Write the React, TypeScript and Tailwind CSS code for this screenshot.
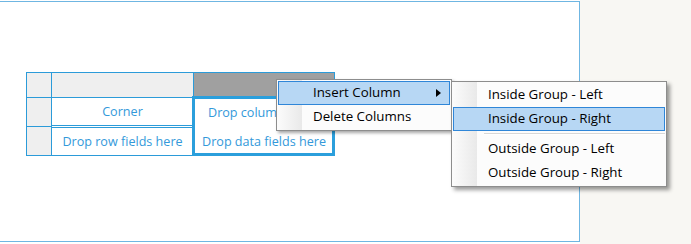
import { useState } from 'react';

const line = 'border-[#2b9bd9]';

function MenuItem({ label, active, arrow }: { label: string; active?: boolean; arrow?: boolean }) {
  return (
    <div
      className={`relative flex h-[24px] items-center border pl-[34px] pr-3 ${
        active ? 'border-[#2f86d8] bg-[#b7d7f4]' : 'border-transparent'
      }`}
    >
      <span className="text-[13.3px] text-black">{label}</span>
      {arrow && (
        <svg className="absolute right-[8px] top-[7px]" width="5" height="8" viewBox="0 0 5 8">
          <path d="M0 0 L5 4 L0 8 Z" fill="#000" />
        </svg>
      )}
    </div>
  );
}

export default function App() {
  const [menu] = useState({ main: ['Insert Column', 'Delete Columns'] });

  return (
    <div
      className="relative flex h-[244px] w-[691px] bg-[#f8f7f3]"
      style={{ fontFamily: '"Open Sans", "Noto Sans", sans-serif' }}
    >
      {/* design surface */}
      <div className="flex w-[580px] flex-col bg-white pt-px pb-[2px]">
        <div className="flex-1 border-y border-r border-[#6fb6e2]">
          <div className="relative ml-[26px] mt-[70px] w-[309px]">
            <div className={`flex h-[84px] border ${line}`}>
              {/* row headers */}
              <div className={`flex w-[25px] flex-col border-r bg-[#efefef] ${line}`}>
                <div className={`h-[25px] border-b ${line}`} />
                <div className={`h-[29px] border-b ${line}`} />
                <div className="flex-1" />
              </div>
              {/* corner column */}
              <div className={`flex w-[142px] flex-col border-r ${line}`}>
                <div className={`h-[25px] border-b bg-[#efefef] ${line}`} />
                <div className={`flex h-[28px] items-center justify-center border-b pt-[2px] text-[12.6px] text-[#3399da] ${line}`}>
                  Corner
                </div>
                <div className={`mt-px flex flex-1 items-center justify-center whitespace-nowrap border-t pt-[2px] text-[12.6px] text-[#3399da] ${line}`}>
                  Drop row fields here
                </div>
              </div>
              {/* data column */}
              <div className="flex flex-1 flex-col">
                <div className="h-[24px] bg-[#a0a0a0]" />
                <div className="flex h-[30px] items-center pl-[14px] pt-[2px] text-[12.6px] text-[#3399da]">
                  <span className="w-[68px] overflow-hidden whitespace-nowrap">Drop column fields here</span>
                </div>
                <div className="flex flex-1 items-center justify-center whitespace-nowrap pt-[2px] text-[12.6px] text-[#3399da]">
                  Drop data fields here
                </div>
              </div>
            </div>
            {/* selection frame */}
            <div className="absolute left-[166px] top-[24px] h-[60px] w-[143px] border-[3px] border-[#2b9fdc]" />
          </div>
        </div>
      </div>
      <div className="flex-1" />

      {/* context menu */}
      <div className="absolute left-[276px] top-[79px] w-[176px] border border-[#8d8d8d] bg-[linear-gradient(to_right,#fbfbfb_1px,#e9e9e9_25px,#fcfcfc_25px)] p-px shadow-[2px_2px_3px_rgba(0,0,0,0.35)]">
        <MenuItem label={menu.main[0]} active arrow />
        <MenuItem label={menu.main[1]} />
      </div>

      {/* submenu */}
      <div className="absolute left-[451px] top-[81px] w-[216px] border border-[#8d8d8d] bg-[linear-gradient(to_right,#fbfbfb_1px,#e9e9e9_25px,#fcfcfc_25px)] p-px shadow-[3px_3px_4px_rgba(0,0,0,0.4)]">
        <MenuItem label="Inside Group - Left" />
        <MenuItem label="Inside Group - Right" active />
        <div className="flex h-[6px] items-center pl-[31px]">
          <div className="h-[2px] w-full border-t border-b border-t-[#d7d7d7] border-b-white" />
        </div>
        <MenuItem label="Outside Group - Left" />
        <MenuItem label="Outside Group - Right" />
      </div>
    </div>
  );
}
